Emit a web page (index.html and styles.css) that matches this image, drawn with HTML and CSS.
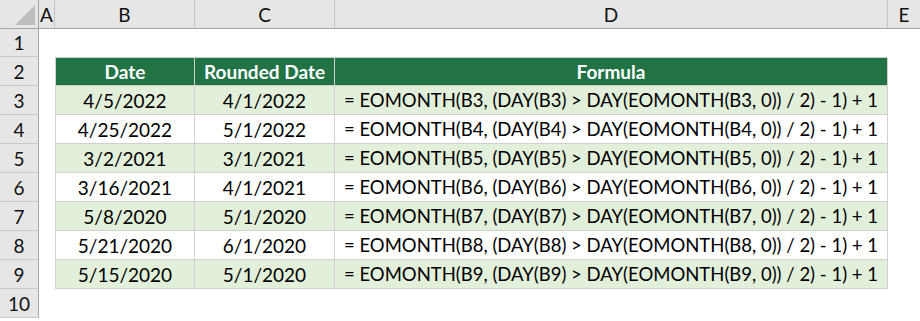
FILE: index.html
```html
<!DOCTYPE html>
<html>
<head>
<meta charset="utf-8">
<link rel="stylesheet" href="styles.css">
</head>
<body>
<div class="sheet">
  <div class="ch corner"><svg class="tri" width="39" height="29" viewBox="0 0 39 29"><polygon points="35,5 35,25 15,25" fill="#bdbdbd"/></svg></div>
  <div class="ch">A</div>
  <div class="ch">B</div>
  <div class="ch">C</div>
  <div class="ch">D</div>
  <div class="ch last">E</div>

  <div class="rh">1</div><div></div><div></div><div></div><div></div><div></div>

  <div class="rh">2</div><div></div>
  <div class="c hd first">Date</div>
  <div class="c hd">Rounded Date</div>
  <div class="c hd">Formula</div>
  <div></div>

  <div class="rh">3</div><div></div>
  <div class="c g first">4/5/2022</div><div class="c g">4/1/2022</div><div class="c g f">= EOMONTH(B3, (DAY(B3) &gt; DAY(EOMONTH(B3, 0)) / 2) - 1) + 1</div><div></div>

  <div class="rh">4</div><div></div>
  <div class="c first">4/25/2022</div><div class="c">5/1/2022</div><div class="c f">= EOMONTH(B4, (DAY(B4) &gt; DAY(EOMONTH(B4, 0)) / 2) - 1) + 1</div><div></div>

  <div class="rh">5</div><div></div>
  <div class="c g first">3/2/2021</div><div class="c g">3/1/2021</div><div class="c g f">= EOMONTH(B5, (DAY(B5) &gt; DAY(EOMONTH(B5, 0)) / 2) - 1) + 1</div><div></div>

  <div class="rh">6</div><div></div>
  <div class="c first">3/16/2021</div><div class="c">4/1/2021</div><div class="c f">= EOMONTH(B6, (DAY(B6) &gt; DAY(EOMONTH(B6, 0)) / 2) - 1) + 1</div><div></div>

  <div class="rh">7</div><div></div>
  <div class="c g first">5/8/2020</div><div class="c g">5/1/2020</div><div class="c g f">= EOMONTH(B7, (DAY(B7) &gt; DAY(EOMONTH(B7, 0)) / 2) - 1) + 1</div><div></div>

  <div class="rh">8</div><div></div>
  <div class="c first">5/21/2020</div><div class="c">6/1/2020</div><div class="c f">= EOMONTH(B8, (DAY(B8) &gt; DAY(EOMONTH(B8, 0)) / 2) - 1) + 1</div><div></div>

  <div class="rh">9</div><div></div>
  <div class="c g first">5/15/2020</div><div class="c g">5/1/2020</div><div class="c g f">= EOMONTH(B9, (DAY(B9) &gt; DAY(EOMONTH(B9, 0)) / 2) - 1) + 1</div><div></div>

  <div class="rh">10</div><div></div><div></div><div></div><div></div><div></div>
</div>
</body>
</html>
```
FILE: styles.css
```css
html, body {
  margin: 0;
  padding: 0;
  background: #ffffff;
}
body {
  font-family: Lato, "Open Sans", sans-serif;
  font-size: 19px;
  color: #000;
}
.sheet {
  display: grid;
  grid-template-columns: 39px 16px 140px 140px 553px 32px;
  grid-template-rows: 29px 28px repeat(9, 29px);
  width: 920px;
  height: 321px;
  overflow: hidden;
}
.ch {
  background: #e6e6e6;
  border-bottom: 1px solid #a6a6a6;
  border-right: 1px solid #c4c4c4;
  box-sizing: border-box;
  display: flex;
  align-items: center;
  justify-content: center;
  color: #111;
}
.ch.corner {
  border-right: 1px solid #a6a6a6;
  position: relative;
}
.ch.last {
  border-right: none;
}
.tri {
  position: absolute;
  left: 0;
  top: 0;
}
.rh {
  background: #e6e6e6;
  border-right: 1px solid #a6a6a6;
  border-bottom: 1px solid #c8c8c8;
  box-sizing: border-box;
  display: flex;
  align-items: center;
  justify-content: center;
  color: #111;
}
.c {
  box-sizing: border-box;
  border-right: 1px solid #d0d0d0;
  border-bottom: 1px solid #d0d0d0;
  display: flex;
  align-items: center;
  justify-content: center;
  white-space: nowrap;
}
.c.f {
  font-size: 18.5px;
}
.c.first {
  border-left: 1px solid #d0d0d0;
}
.c.hd {
  background: #217346;
  color: #fff;
  font-weight: bold;
  border-top: 1px solid #d0d0d0;
}
.c.g {
  background: #e2efda;
}
```
